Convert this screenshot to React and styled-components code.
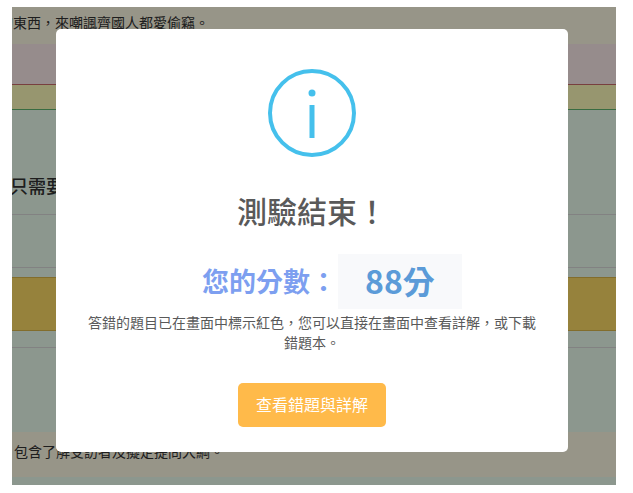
import React from "react"
import styled, { createGlobalStyle } from "styled-components"

const cjk = `"Noto Sans CJK TC", "Noto Sans", sans-serif`

const GlobalStyle = createGlobalStyle`
  html, body {
    margin: 0;
    background: #fff;
    font-family: ${cjk};
  }
`

const Frame = styled.div`
  position: relative;
  width: 604px;
  height: 478px;
  margin: 7px 0 0 12px;
  overflow: hidden;
  background: #e9fced;
  color: #333;
`

const Band = styled.div`
  display: flex;
  align-items: ${(p) => p.$align || "center"};
  box-sizing: border-box;
  height: ${(p) => p.$height}px;
  padding-top: ${(p) => p.$padTop || 0}px;
  padding-bottom: ${(p) => p.$padBottom || 0}px;
  background: ${(p) => p.$bg || "transparent"};
  border-top: ${(p) => (p.$top ? `1px solid ${p.$top}` : "none")};
  border-bottom: ${(p) => (p.$bottom ? `1px solid ${p.$bottom}` : "none")};
`

const Line = styled.p`
  margin: 0 0 0 ${(p) => p.$indent || 0}px;
  font-size: 14px;
  line-height: 20px;
  white-space: nowrap;
`

const Heading = styled.h3`
  margin: 0 0 0 -2px;
  font-size: 18px;
  line-height: 24px;
  font-weight: 500;
  white-space: nowrap;
`

const Overlay = styled.div`
  position: absolute;
  inset: 0;
  background: rgba(0, 0, 0, 0.4);
  padding: 22px 48px 33px 44px;
  box-sizing: border-box;
`

const Modal = styled.div`
  display: flex;
  flex-direction: column;
  align-items: center;
  width: 512px;
  height: 423px;
  box-sizing: border-box;
  padding-top: 40px;
  background: #fff;
  border-radius: 5px;
`

const Icon = styled.svg`
  display: block;
  width: 88px;
  height: 88px;
`

const Title = styled.h2`
  margin: 26px 0 0;
  font-size: 30px;
  line-height: 54px;
  font-weight: 500;
  color: #595959;
`

const ScoreRow = styled.div`
  display: flex;
  align-items: center;
  margin: 17px 0 0 40px;
  height: 55px;
`

const ScoreLabel = styled.span`
  padding-bottom: 3px;
  font-size: 27px;
  font-weight: 600;
  color: #7d9ff0;
`

const ScoreBox = styled.span`
  display: flex;
  align-items: center;
  justify-content: center;
  box-sizing: border-box;
  width: 124px;
  height: 55px;
  margin-left: 1px;
  padding-bottom: 3px;
  background: #f8f9fb;
  font-size: 32px;
  font-weight: 600;
  color: #5b9bd8;
`

const Message = styled.p`
  margin: 3px 0 0;
  width: 450px;
  font-size: 14px;
  line-height: 20px;
  text-align: center;
  color: #595959;
`

const ActionButton = styled.button`
  margin-top: 31px;
  width: 148px;
  height: 44px;
  padding: 0 0 2px;
  border: none;
  border-radius: 5px;
  background: #ffba4a;
  color: #fff;
  font-family: ${cjk};
  font-size: 16px;
`

const App = () => (
  <>
    <GlobalStyle />
    <Frame>
      <Band $height={37} $bg="#fcf8e3" $align="flex-start" $padTop={5}>
        <Line $indent={-13}>的東西，來嘲諷齊國人都愛偷竊。</Line>
      </Band>
      <Band $height={41} $bg="#fae9e9" $bottom="#c96a6a" />
      <Band $height={25} $bg="#fcfab9" $bottom="#5fb56f" />
      <Band $height={105} $bottom="#d9d9d9" $align="flex-end" $padBottom={17}>
        <Heading>只需要</Heading>
      </Band>
      <Band $height={53} $bottom="#d9d9d9" />
      <Band $height={9} />
      <Band $height={54} $bg="#fad964" $top="#d9b64a" $bottom="#d9b64a" />
      <Band $height={17} $bottom="#d9d9d9" />
      <Band $height={84} />
      <Band $height={45} $bg="#fcf8e3" $align="flex-start" $padTop={9}>
        <Line $indent={2}>包含了解受訪者及擬定提問大綱。</Line>
      </Band>
      <Overlay>
        <Modal>
          <Icon viewBox="0 0 88 88" fill="none">
            <circle cx="44" cy="44" r="42" stroke="#45c0ec" strokeWidth="4" />
            <circle cx="44" cy="24" r="3.5" fill="#45c0ec" />
            <rect x="41.5" y="36" width="5" height="33" fill="#45c0ec" />
          </Icon>
          <Title>測驗結束！</Title>
          <ScoreRow>
            <ScoreLabel>您的分數：</ScoreLabel>
            <ScoreBox>88分</ScoreBox>
          </ScoreRow>
          <Message>答錯的題目已在畫面中標示紅色，您可以直接在畫面中查看詳解，或下載錯題本。</Message>
          <ActionButton>查看錯題與詳解</ActionButton>
        </Modal>
      </Overlay>
    </Frame>
  </>
)

export default App
